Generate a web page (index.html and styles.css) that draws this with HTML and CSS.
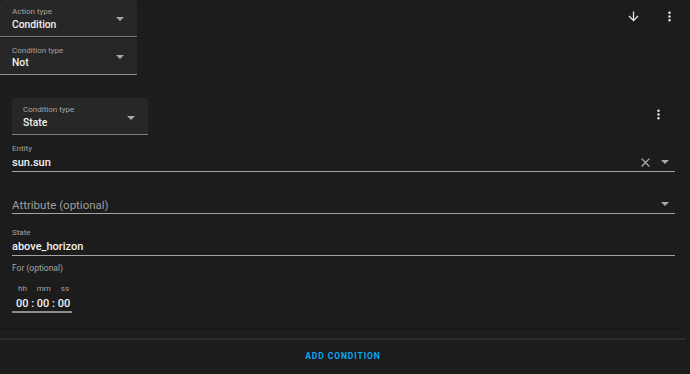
FILE: index.html
```html
<!DOCTYPE html>
<html lang="en">
<head>
    <meta charset="UTF-8">
    <meta name="viewport" content="width=device-width, initial-scale=1.0">
    <title>Condition editor</title>
    <link rel="stylesheet" href="styles.css">
</head>
<body>
    <div class="card">
        <div class="header">
            <div class="type-selects">
                <div class="select">
                    <div class="select-label">Action type</div>
                    <div class="select-value">Condition</div>
                    <span class="caret"></span>
                </div>
                <div class="select second">
                    <div class="select-label">Condition type</div>
                    <div class="select-value">Not</div>
                    <span class="caret"></span>
                </div>
            </div>
            <div class="header-icons">
                <svg class="icon" viewBox="0 0 24 24"><path d="M11 4h2v12l5.5-5.5 1.42 1.42L12 19.84l-7.92-7.92L5.5 10.5 11 16V4z"/></svg>
                <svg class="icon" viewBox="0 0 24 24"><path d="M12 16a2 2 0 1 1 0 4 2 2 0 0 1 0-4zm0-6a2 2 0 1 1 0 4 2 2 0 0 1 0-4zm0-6a2 2 0 1 1 0 4 2 2 0 0 1 0-4z"/></svg>
            </div>
        </div>

        <div class="condition">
            <div class="condition-top">
                <div class="select inner">
                    <div class="select-label">Condition type</div>
                    <div class="select-value">State</div>
                    <span class="caret"></span>
                </div>
                <svg class="icon menu" viewBox="0 0 24 24"><path d="M12 16a2 2 0 1 1 0 4 2 2 0 0 1 0-4zm0-6a2 2 0 1 1 0 4 2 2 0 0 1 0-4zm0-6a2 2 0 1 1 0 4 2 2 0 0 1 0-4z"/></svg>
            </div>

            <div class="field entity">
                <div class="field-label">Entity</div>
                <div class="field-row">
                    <span class="field-value">sun.sun</span>
                    <svg class="clear" viewBox="0 0 24 24"><path d="M19 6.41 17.59 5 12 10.59 6.41 5 5 6.41 10.59 12 5 17.59 6.41 19 12 13.41 17.59 19 19 17.59 13.41 12z"/></svg>
                    <span class="caret small"></span>
                </div>
            </div>

            <div class="field attribute">
                <div class="field-label"></div>
                <div class="field-row">
                    <span class="field-value placeholder">Attribute (optional)</span>
                    <span class="caret small"></span>
                </div>
            </div>

            <div class="field state">
                <div class="field-label">State</div>
                <div class="field-row">
                    <span class="field-value">above_horizon</span>
                </div>
            </div>

            <div class="for-label">For (optional)</div>
            <div class="duration">
                <div class="units">
                    <span>hh</span><span>mm</span><span>ss</span>
                </div>
                <div class="time">00 : 00 : 00</div>
            </div>
        </div>

        <div class="actions">
            <button class="add-btn">ADD CONDITION</button>
        </div>
    </div>
</body>
</html>
```

FILE: styles.css
```css
body {
    margin: 0;
    background-color: #1c1c1c;
    font-family: Roboto, "Liberation Sans", sans-serif;
    color: #e1e1e1;
}
.card {
    width: 686px;
    height: 374px;
    display: flex;
    flex-direction: column;
}
.header {
    display: flex;
    justify-content: space-between;
    align-items: flex-start;
}
.type-selects {
    width: 137px;
}
.select {
    position: relative;
    height: 37px;
    padding: 7px 0 0 12px;
    box-sizing: border-box;
    background-color: #272727;
    border-radius: 4px 4px 0 0;
    border-bottom: 1px solid #777;
}
.select.second {
    margin-top: 1px;
    height: 37px;
    padding-top: 8px;
    border-bottom-color: #8a8a8a;
}
.select-label {
    font-size: 8px;
    line-height: 10px;
    color: #a4a4a4;
}
.select-value {
    font-size: 10.3px;
    line-height: 15px;
    font-weight: 500;
    color: #f0f0f0;
}
.select.second .select-value {
    margin-top: -1px;
}
.caret {
    position: absolute;
    right: 13px;
    top: 17px;
    width: 0;
    height: 0;
    border-left: 4px solid transparent;
    border-right: 4px solid transparent;
    border-top: 4px solid #a8a8a8;
}
.header-icons {
    display: flex;
    gap: 21px;
    padding: 9px 9px 0 0;
}
.icon {
    width: 15px;
    height: 15px;
    fill: #e8e8e8;
}
.condition {
    margin-top: 23px;
    padding: 0 11px 0 12px;
}
.condition-top {
    display: flex;
    justify-content: space-between;
    align-items: flex-start;
}
.select.inner {
    width: 136px;
    height: 37px;
    padding-top: 7px;
    padding-left: 11px;
    border-bottom-color: #7c7c7c;
}
.select.inner .caret {
    right: 13px;
    top: 18px;
}
.icon.menu {
    margin: 9px 9px 0 0;
}
.field {
    border-bottom: 1px solid #a3a3a3;
}
.field-label {
    font-size: 8px;
    line-height: 10px;
    height: 10px;
    color: #a4a4a4;
}
.field-row {
    display: flex;
    align-items: center;
    height: 16px;
    padding-bottom: 1px;
}
.field-value {
    flex: 1;
    font-size: 11px;
    font-weight: 500;
    color: #f2f2f2;
    padding-top: 1px;
}
.field-value.placeholder {
    font-weight: 400;
    color: #9c9c9c;
    font-size: 11.5px;
}
.field .caret.small {
    position: static;
    margin: 0 6px 0 0;
}
.clear {
    width: 15px;
    height: 15px;
    fill: #a8a8a8;
    margin-right: 8px;
}
.entity {
    margin-top: 9px;
}
.attribute {
    margin-top: 14px;
}
.state {
    margin-top: 14px;
}
.for-label {
    margin-top: 7px;
    font-size: 8.5px;
    line-height: 10px;
    color: #a4a4a4;
}
.duration {
    width: 60px;
    margin-top: 11px;
    border-bottom: 2px solid #8c8c8c;
}
.units {
    display: flex;
    gap: 10px;
    padding-left: 6px;
    font-size: 8px;
    line-height: 10px;
    color: #a4a4a4;
}
.time {
    margin-top: 2px;
    padding-left: 4px;
    font-size: 11px;
    line-height: 15px;
    color: #f2f2f2;
    font-weight: 500;
}
.actions {
    margin-top: 15px;
    border-top: 1px solid #161616;
    padding-top: 9px;
}
.add-btn {
    display: block;
    width: 100%;
    border: none;
    border-top: 2px solid #2c2c2c;
    background: none;
    padding: 11px 0 0 0;
    font-family: Roboto, "Liberation Sans", sans-serif;
    font-size: 8.5px;
    font-weight: 700;
    letter-spacing: 0.9px;
    color: #03a9f4;
    text-align: center;
}
```
